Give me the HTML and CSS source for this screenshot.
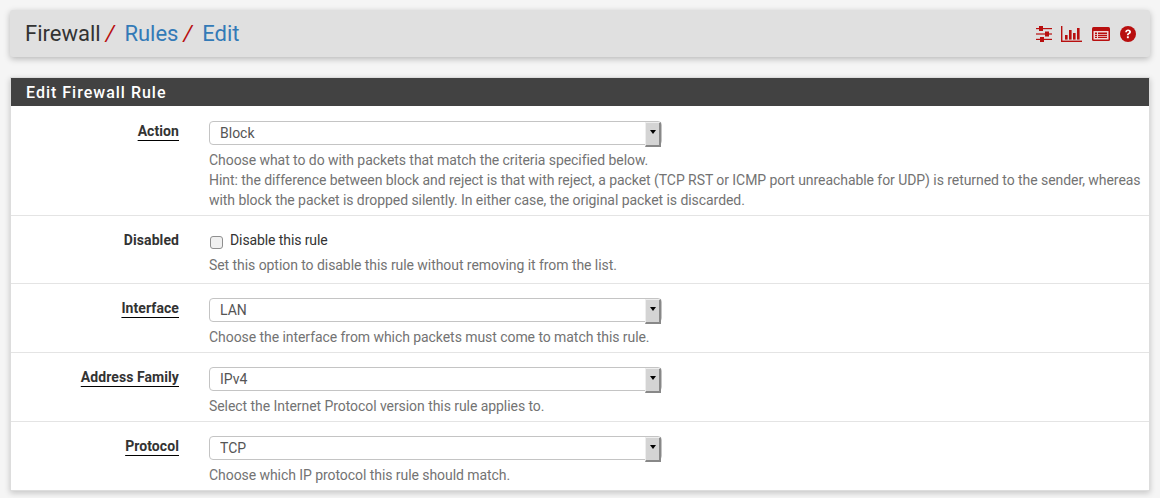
FILE: index.html
```html
<!DOCTYPE html>
<html>
<head>
    <title>Firewall: Rules: Edit</title>
    <link rel="stylesheet" href="styles.css">
</head>
<body>
    <div class="crumbs">
        <h2 class="crumb-title">
            <span>Firewall</span><i class="sep">/</i>
            <a href="#" class="crumb-link">Rules</a><i class="sep">/</i>
            <a href="#" class="crumb-link">Edit</a>
        </h2>
        <div class="crumb-icons">
            <svg class="icon-sliders" width="18" height="16" viewBox="0 0 18 16" fill="#b80f0f">
                <rect x="1" y="2" width="16" height="1.2"/><rect x="4" y="0" width="4" height="5"/>
                <rect x="1" y="7.4" width="16" height="1.2"/><rect x="10" y="5.5" width="4" height="5"/>
                <rect x="1" y="12.8" width="16" height="1.2"/><rect x="5" y="11" width="4" height="5"/>
            </svg>
            <svg width="21" height="16" viewBox="0 0 21 16" fill="#b80f0f">
                <rect x="0" y="0" width="1.4" height="16"/><rect x="0" y="14.6" width="21" height="1.4"/>
                <rect x="4" y="9" width="2.6" height="4.6"/><rect x="8" y="4" width="2.6" height="9.6"/>
                <rect x="12" y="7" width="2.6" height="6.6"/><rect x="16" y="2" width="2.6" height="11.6"/>
            </svg>
            <svg width="18" height="14" viewBox="0 0 18 14">
                <rect width="18" height="14" rx="1.5" fill="#b80f0f"/>
                <rect x="1.5" y="4" width="15" height="8.5" fill="#f0d8d8"/>
                <path d="M3 5.6h2v1.3H3zM6 5.6h9v1.3H6zM3 7.7h2V9H3zM6 7.7h9V9H6zM3 9.8h2v1.3H3zM6 9.8h9v1.3H6z" fill="#b80f0f"/>
            </svg>
            <svg width="16" height="16" viewBox="0 0 16 16">
                <circle cx="8" cy="8" r="8" fill="#b80f0f"/>
                <path d="M5.2 6.2C5.3 4.4 6.5 3.4 8.1 3.4c1.7 0 2.9 1 2.9 2.4 0 1.2-.7 1.8-1.5 2.3-.6.4-.8.6-.8 1.2H6.9c0-1.2.4-1.8 1.2-2.3.7-.4 1-.7 1-1.1 0-.5-.4-.8-1-.8-.7 0-1 .4-1.1 1.1z" fill="#fff"/>
                <rect x="6.9" y="10.3" width="1.9" height="1.9" fill="#fff"/>
            </svg>
        </div>
    </div>

    <div class="panel">
        <div class="panel-heading">Edit Firewall Rule</div>

        <div class="form-row row-action">
            <label class="row-label required">Action</label>
            <div>
                <div class="select-box"><select><option>Block</option></select></div>
                <p class="help">Choose what to do with packets that match the criteria specified below.<br>Hint: the difference between block and reject is that with reject, a packet (TCP RST or ICMP port unreachable for UDP) is returned to the sender, whereas with block the packet is dropped silently. In either case, the original packet is discarded.</p>
            </div>
        </div>

        <div class="form-row row-short">
            <label class="row-label">Disabled</label>
            <div>
                <label class="check-line"><input type="checkbox"> Disable this rule</label>
                <p class="help">Set this option to disable this rule without removing it from the list.</p>
            </div>
        </div>

        <div class="form-row">
            <label class="row-label required">Interface</label>
            <div>
                <div class="select-box"><select><option>LAN</option></select></div>
                <p class="help">Choose the interface from which packets must come to match this rule.</p>
            </div>
        </div>

        <div class="form-row">
            <label class="row-label required">Address Family</label>
            <div>
                <div class="select-box"><select><option>IPv4</option></select></div>
                <p class="help">Select the Internet Protocol version this rule applies to.</p>
            </div>
        </div>

        <div class="form-row row-short">
            <label class="row-label required">Protocol</label>
            <div>
                <div class="select-box"><select><option>TCP</option></select></div>
                <p class="help">Choose which IP protocol this rule should match.</p>
            </div>
        </div>
    </div>
</body>
</html>
```
FILE: styles.css
```css
* {
    box-sizing: border-box;
}
html, body {
    overflow: hidden;
}
body {
    margin: 0;
    padding: 10px 10px 0;
    height: 498px;
    background: #f5f5f5;
    font-family: Roboto, sans-serif;
    font-size: 14px;
    line-height: 20px;
    color: #333;
}
.crumbs {
    display: flex;
    justify-content: space-between;
    align-items: center;
    height: 47px;
    padding: 0 15px;
    background: #e0e0e0;
    border-radius: 3px;
    box-shadow: 0 2px 6px rgba(0, 0, 0, 0.25);
}
.crumb-title {
    margin: 0;
    font-size: 22px;
    font-weight: 400;
    line-height: 24px;
}
.crumb-link {
    color: #337ab7;
    text-decoration: none;
    margin-left: 1.5px;
}
.sep {
    color: #b80f0f;
    margin: 0 3px 0 5px;
}
.crumb-icons {
    display: flex;
    align-items: center;
    gap: 10px;
    margin-right: -1px;
}
.icon-sliders {
    margin-right: -2px;
}
.panel {
    margin-top: 20px;
    background: #fff;
    border: 1px solid #ddd;
    box-shadow: 0 2px 6px rgba(0, 0, 0, 0.2);
}
.panel-heading {
    height: 28px;
    padding: 1px 15px 0;
    background: #424242;
    color: #fff;
    font-size: 16px;
    font-weight: 500;
    letter-spacing: 1px;
    line-height: 27px;
}
.form-row {
    display: grid;
    grid-template-columns: 168px 1fr;
    column-gap: 30px;
    align-items: start;
    height: 69px;
    padding-top: 14px;
    border-bottom: 1px solid #e4e4e4;
}
.row-action {
    height: 110px;
    padding-top: 15px;
}
.row-short {
    height: 68px;
}
.form-row:last-child {
    border-bottom: 0;
}
.row-label {
    justify-self: end;
    font-weight: 700;
    letter-spacing: 0.08px;
}
.row-label.required {
    text-decoration: underline;
    text-underline-offset: 4px;
    text-decoration-thickness: 1px;
    text-decoration-color: #000;
}
.select-box {
    position: relative;
    width: 453px;
    height: 24px;
}
.select-box::after {
    content: "";
    position: absolute;
    right: 1px;
    top: 1px;
    width: 13px;
    height: 22px;
    background: #d4d4d4;
    border-top: 1px solid #eee;
    border-left: 1px solid #eee;
    border-right: 2px solid #888;
    border-bottom: 2px solid #888;
}
.select-box::before {
    content: "";
    position: absolute;
    z-index: 1;
    right: 6px;
    top: 9px;
    border: 3px solid transparent;
    border-top: 4px solid #000;
    border-bottom: 0;
}
.select-box select {
    appearance: none;
    display: block;
    width: 100%;
    height: 24px;
    padding: 0 0 0 10px;
    background: #fff;
    border: 1px solid #c4c4c4;
    border-radius: 4px;
    font-family: Roboto, sans-serif;
    font-size: 14px;
    color: #555;
}
.help {
    margin: 5px 0 0;
    color: #737373;
    letter-spacing: -0.06px;
}
.check-line {
    display: flex;
    align-items: center;
    height: 20px;
    letter-spacing: -0.1px;
}
.check-line input {
    appearance: none;
    width: 13px;
    height: 13px;
    margin: 4px 7px 0 1px;
    background: #f0f0f0;
    border: 1px solid #8f8f8f;
    border-radius: 3px;
}
```
